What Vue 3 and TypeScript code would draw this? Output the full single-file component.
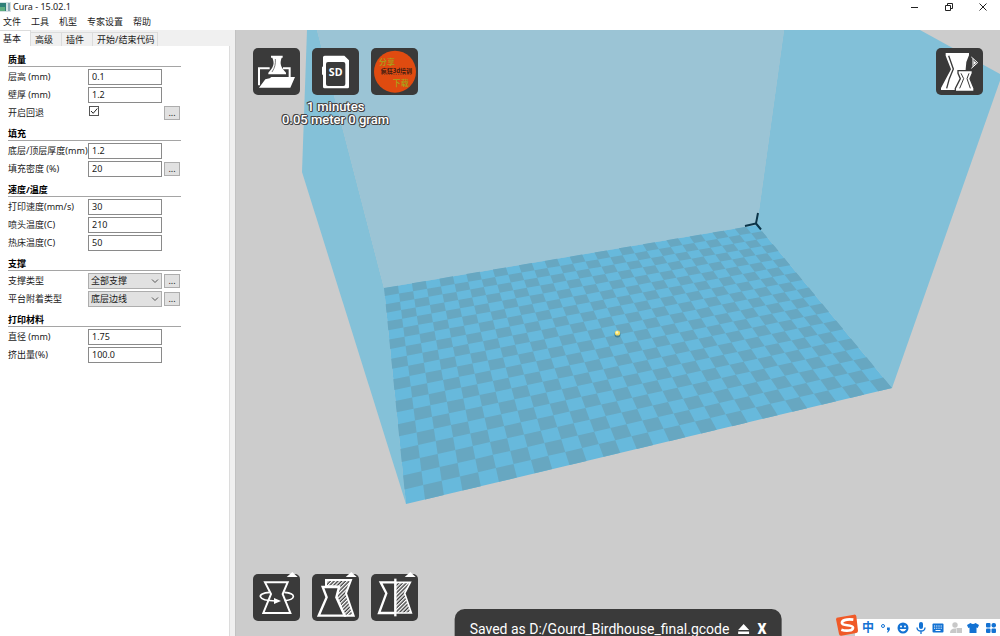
<script setup lang="ts">
import { ref } from 'vue'

type Point = [number, number]
interface Field {
  id: string
  label: string
  kind: 'text' | 'check' | 'select'
  value: string
  more?: boolean
}
interface Section {
  title: string
  fields: Field[]
}

const menus = ['文件', '工具', '机型', '专家设置', '帮助']
const tabs = ['基本', '高级', '插件', '开始/结束代码']
const activeTab = ref(0)

const sections = ref<Section[]>([
  {
    title: '质量',
    fields: [
      { id: 'layer', label: '层高 (mm)', kind: 'text', value: '0.1' },
      { id: 'wall', label: '壁厚 (mm)', kind: 'text', value: '1.2' },
      { id: 'retract', label: '开启回退', kind: 'check', value: '', more: true },
    ],
  },
  {
    title: '填充',
    fields: [
      { id: 'bottom', label: '底层/顶层厚度(mm)', kind: 'text', value: '1.2' },
      { id: 'density', label: '填充密度 (%)', kind: 'text', value: '20', more: true },
    ],
  },
  {
    title: '速度/温度',
    fields: [
      { id: 'speed', label: '打印速度(mm/s)', kind: 'text', value: '30' },
      { id: 'nozzle', label: '喷头温度(C)', kind: 'text', value: '210' },
      { id: 'bed', label: '热床温度(C)', kind: 'text', value: '50' },
    ],
  },
  {
    title: '支撑',
    fields: [
      { id: 'support', label: '支撑类型', kind: 'select', value: '全部支撑', more: true },
      { id: 'adhesion', label: '平台附着类型', kind: 'select', value: '底层边线', more: true },
    ],
  },
  {
    title: '打印材料',
    fields: [
      { id: 'diameter', label: '直径 (mm)', kind: 'text', value: '1.75' },
      { id: 'flow', label: '挤出量(%)', kind: 'text', value: '100.0' },
    ],
  },
])

// Perspective projection of the unit square onto the build plate.
const plate: Point[] = [[384, 288], [757, 225], [892, 388], [406, 504]]
const columns = 30
const rows = 20

function projector(q: Point[]) {
  const [[x0, y0], [x1, y1], [x2, y2], [x3, y3]] = q
  const dx1 = x1 - x2, dx2 = x3 - x2, sx = x0 - x1 + x2 - x3
  const dy1 = y1 - y2, dy2 = y3 - y2, sy = y0 - y1 + y2 - y3
  const det = dx1 * dy2 - dx2 * dy1
  const g = (sx * dy2 - dx2 * sy) / det
  const h = (dx1 * sy - sx * dy1) / det
  return (u: number, v: number): string => {
    const w = g * u + h * v + 1
    const x = ((x1 - x0 + g * x1) * u + (x3 - x0 + h * x3) * v + x0) / w
    const y = ((y1 - y0 + g * y1) * u + (y3 - y0 + h * y3) * v + y0) / w
    return `${x.toFixed(2)} ${y.toFixed(2)}`
  }
}

const at = projector(plate)
let darkCells = ''
for (let r = 0; r < rows; r++) {
  for (let c = r % 2; c < columns; c += 2) {
    const l = c / columns, rt = (c + 1) / columns, t = r / rows, b = (r + 1) / rows
    darkCells += `M${at(l, t)}L${at(rt, t)}L${at(rt, b)}L${at(l, b)}Z`
  }
}
</script>

<template>
  <div class="window">
    <header class="titlebar">
      <svg class="app-icon" viewBox="0 0 11 10" aria-hidden="true">
        <rect width="11" height="10" fill="#d5e2e4" />
        <rect y="1" width="6" height="8" fill="#2f7f78" />
        <rect y="5" width="5" height="4" fill="#5fae80" />
        <rect x="8" y="1" width="2" height="8" fill="#8aa9b8" />
      </svg>
      <span class="title">Cura - 15.02.1</span>
      <div class="window-buttons">
        <button aria-label="Minimize"><svg viewBox="0 0 10 10"><path d="M1 5.5H8" /></svg></button>
        <button aria-label="Restore"><svg viewBox="0 0 10 10"><path d="M1.5 3.5H6.500V8.500H1.500ZM3.500 3V1.500H8.500V6.500H7" /></svg></button>
        <button aria-label="Close"><svg viewBox="0 0 10 10"><path d="M1.500 1.500L8.500 8.500M8.500 1.500L1.500 8.500" /></svg></button>
      </div>
    </header>

    <nav class="menubar">
      <button v-for="m in menus" :key="m">{{ m }}</button>
    </nav>

    <main class="body">
      <aside class="sidebar">
        <div class="tabs" role="tablist">
          <button
            v-for="(t, i) in tabs"
            :key="t"
            role="tab"
            :aria-selected="i === activeTab"
            :class="{ active: i === activeTab }"
            @click="activeTab = i"
          >{{ t }}</button>
        </div>
        <form class="panel" @submit.prevent>
          <section v-for="s in sections" :key="s.title">
            <h2>{{ s.title }}</h2>
            <div v-for="f in s.fields" :key="f.id" class="row">
              <label :for="f.id">{{ f.label }}</label>
              <input v-if="f.kind === 'text'" :id="f.id" v-model="f.value" type="text" />
              <span v-else-if="f.kind === 'check'" class="check">
                <input :id="f.id" type="checkbox" checked />
                <svg viewBox="0 0 10 10" aria-hidden="true"><path d="M2 5L4.200 7.300L8.300 2.500" /></svg>
              </span>
              <span v-else class="choice">
                <select :id="f.id" v-model="f.value"><option>{{ f.value }}</option></select>
                <svg viewBox="0 0 8 6" aria-hidden="true"><path d="M1 1.500L4 4.500L7 1.500" /></svg>
              </span>
              <button v-if="f.more" class="more" type="button" :aria-label="f.label + ' …'">...</button>
            </div>
          </section>
        </form>
      </aside>

      <section class="viewport">
        <svg class="scene" viewBox="236 30 764 606" preserveAspectRatio="xMidYMid slice" aria-hidden="true">
          <path d="M317 30H784L757 225L384 288Z" fill="#9bc4d5" />
          <path d="M307 30H317L384 288L406 504L302 172Z" fill="#84c1d8" />
          <path d="M784 30H920L1002 75L892 388L757 225Z" fill="#82c0d8" />
          <path d="M384 288L757 225L892 388L406 504Z" fill="#67b9dc" />
          <path :d="darkCells" fill="#67a7c1" />
          <path d="M758 213L756 223.500L745 226M756 223.500L761 229.500" fill="none" stroke="#0b3448" stroke-width="2" />
          <circle cx="617.500" cy="334.500" r="3" fill="#3f7f98" />
          <circle cx="617.500" cy="333" r="2.600" fill="#f2dc62" />
          <circle cx="617" cy="332.500" r="1.200" fill="#fff7c4" />
        </svg>

        <div class="top">
          <div class="job">
            <div class="tools">
              <button class="tool" aria-label="Load">
                <svg viewBox="0 0 141 141">
                  <path d="M18 112V61H50M90 61H110V90" fill="none" stroke="#fff" stroke-width="6" />
                  <path d="M54 23H89V29H86C79 47 84 58 99 74V79H46V74C61 58 66 47 58 29H54Z" fill="#fff" />
                  <path d="M67 33C68 48 66 58 57 72" fill="none" stroke="#3a3a3a" stroke-width="2" />
                  <path d="M37 94L50 91L55 87H126L112 119H18Z" fill="#fff" />
                </svg>
              </button>
              <button class="tool" aria-label="Save to SD card">
                <svg viewBox="0 0 141 141">
                  <path d="M38 23H97L111 37V117Q111 121 107 121H38Q33 121 33 116V82L30 79V58L33 55V28Q33 23 38 23Z" fill="#fff" />
                  <rect x="42" y="42" width="58" height="72" rx="6" fill="#3a3a3a" />
                  <text x="71" y="84" class="sd">SD</text>
                </svg>
              </button>
              <button class="tool" aria-label="Share">
                <svg viewBox="0 0 141 141">
                  <circle cx="72" cy="71" r="63" fill="#e04b10" />
                  <text x="48" y="52" class="badge-green">分享</text>
                  <text x="76" y="75" class="badge-dark">疯狂3d培训</text>
                  <path d="M32 79H120" stroke="#8c3a1c" stroke-width="3" stroke-dasharray="4 3" />
                  <text x="89" y="113" class="badge-green">下载</text>
                </svg>
              </button>
            </div>
            <p class="estimate">1 minutes<br />0.05 meter 0 gram</p>
          </div>
          <button class="tool" aria-label="View mode">
            <svg viewBox="0 0 141 141">
              <path d="M29 15H99V22L91 42L89 64V126H15V120L45 64L29 23Z" fill="#fff" />
              <path d="M38 23L52 63L40 92L32 121" fill="none" stroke="#3a3a3a" stroke-width="4" />
              <path d="M66 68H109V76L102 92L114 121V130H58V121L73 92L66 76Z" fill="#fff" stroke="#3a3a3a" stroke-width="4" />
              <path d="M75 76L83 92L71 121M99 76L93 92L103 121" fill="none" stroke="#3a3a3a" stroke-width="3" />
              <path d="M106 27L125 44L106 61M111 32V56" fill="none" stroke="#fff" stroke-width="3" />
              <path d="M113 38L121 44L113 51Z" fill="#fff" />
            </svg>
          </button>
        </div>

        <div class="tools bottom">
          <button class="tool" aria-label="Rotate">
            <svg viewBox="0 0 141 141">
              <path d="M101 9L118 -6L134 9Z" fill="#fff" />
              <path d="M36 25H104L89 60L112 117H31L54 60Z" fill="none" stroke="#fff" stroke-width="6" />
              <path d="M50 55C10 57 10 80 68 81M94 55C132 58 128 77 95 80" fill="none" stroke="#fff" stroke-width="5" />
              <path d="M63 72L84 81L63 90Z" fill="#fff" />
            </svg>
          </button>
          <button class="tool" aria-label="Scale">
            <svg viewBox="0 0 141 141">
              <defs>
                <pattern id="hatch" width="8" height="8" patternUnits="userSpaceOnUse" patternTransform="rotate(45)">
                  <rect width="4" height="8" fill="#fff" />
                </pattern>
              </defs>
              <path d="M101 9L118 -6L134 9Z" fill="#fff" />
              <path d="M42 36V18H117L102 58L125 125H98L73 69L81 38Z" fill="url(#hatch)" stroke="#fff" stroke-width="6" />
              <path d="M32 39H81L73 70L98 125H20L44 70Z" fill="#3a3a3a" stroke="#fff" stroke-width="7" />
            </svg>
          </button>
          <button class="tool" aria-label="Mirror">
            <svg viewBox="0 0 141 141">
              <path d="M101 9L118 -6L134 9Z" fill="#fff" />
              <path d="M73 25H118L101 58L121 117H73Z" fill="url(#hatch)" stroke="#fff" stroke-width="5" />
              <path d="M73 25H29L46 58L24 117H73" fill="none" stroke="#fff" stroke-width="7" />
              <path d="M73 14V127" stroke="#fff" stroke-width="7" />
            </svg>
          </button>
        </div>

        <div class="toast" role="status">
          <span>Saved as D:/Gourd_Birdhouse_final.gcode</span>
          <button aria-label="Eject"><svg viewBox="0 0 12 12"><path d="M6 1L11.500 7H0.500ZM0.500 8.500H11.500V11H0.500Z" /></svg></button>
          <button class="dismiss">X</button>
        </div>

        <div class="ime">
          <svg class="ime-logo" viewBox="0 0 66 66" aria-hidden="true">
            <path d="M2 11L54 2Q60 1 61 7L66 50Q66 56 61 57L16 65Q10 66 9 60L0 16Z" fill="#f05a28" />
            <path d="M52 17C30 14 16 20 18 28C20 37 50 30 51 41C51 51 30 52 16 47" fill="none" stroke="#fff" stroke-width="8" />
          </svg>
          <div class="ime-bar">
            <span class="zh">中</span>
            <svg viewBox="0 0 12 12"><circle cx="3" cy="4" r="1.500" fill="none" stroke="#1372d3" /><path d="M7 5.500H9.800V8L8 10.500H7L8 8H7Z" /></svg>
            <svg viewBox="0 0 12 12"><circle cx="6" cy="6" r="5.500" /><circle cx="4" cy="4.500" r="1" fill="#fff" /><circle cx="8" cy="4.500" r="1" fill="#fff" /><path d="M2.500 7H9.500Q6 12 2.500 7Z" fill="#fff" /></svg>
            <svg viewBox="0 0 12 12"><rect x="4" y="0" width="4" height="7" rx="2" /><path d="M2 5.500Q2 9 6 9Q10 9 10 5.500M6 9V12" fill="none" stroke="#1372d3" stroke-width="1.300" /></svg>
            <svg viewBox="0 0 12 12"><rect x="0.500" y="1.500" width="11" height="9" rx="1" /><path d="M2 4H10M2 6.200H10" stroke="#fff" stroke-dasharray="1.200 1" /><path d="M3.500 8.500H8.500" stroke="#fff" /></svg>
            <svg viewBox="0 0 12 12" class="muted"><circle cx="5" cy="3" r="2.700" /><path d="M0 11Q0 6.500 5 6.500H6V11Z" /><rect x="6.500" y="6" width="5.500" height="5" /></svg>
            <svg viewBox="0 0 12 12"><path d="M3.500 1Q6 3 8.500 1L12 3L10.700 6L9.500 5.500V11H2.500V5.500L1.300 6L0 3Z" /></svg>
            <svg viewBox="0 0 12 12"><rect x="1" y="1" width="4.500" height="4.500" rx="1" /><rect x="6.500" y="1" width="4.500" height="4.500" rx="2" /><rect x="1" y="6.500" width="4.500" height="4.500" rx="1" /><rect x="6.500" y="6.500" width="4.500" height="4.500" rx="1" /></svg>
          </div>
        </div>
      </section>
    </main>
  </div>
</template>

<style>
body {
  margin: 0;
}
</style>

<style scoped>
.window {
  display: flex;
  flex-direction: column;
  height: 100vh;
  overflow: hidden;
  background: #fff;
  color: #1a1a1a;
  font: 9px/12px "Noto Sans", "Noto Sans CJK SC", sans-serif;
}
.window * {
  box-sizing: border-box;
}
button,
input,
select {
  margin: 0;
  padding: 0;
  border: 0;
  border-radius: 0;
  background: none;
  color: inherit;
  font: inherit;
}
svg {
  display: block;
}
.titlebar {
  display: flex;
  align-items: center;
  flex: none;
  height: 14px;
}
.app-icon {
  width: 11px;
  height: 10px;
}
.title {
  margin-left: 2px;
}
.window-buttons {
  display: flex;
  gap: 24px;
  margin-left: auto;
  padding-right: 12px;
}
.window-buttons svg {
  width: 10px;
  height: 10px;
  fill: none;
  stroke: #222;
}
.menubar {
  display: flex;
  align-items: center;
  flex: none;
  gap: 10px;
  height: 16px;
  padding-left: 3px;
}
.body {
  display: flex;
  flex: 1;
  min-height: 0;
}
.sidebar {
  display: flex;
  flex-direction: column;
  flex: none;
  width: 236px;
  padding-right: 5px;
  background: #f0f0f0;
  border-right: 1px solid #c2c2c2;
}
.tabs {
  display: flex;
  align-items: flex-end;
  height: 16px;
}
.tabs button {
  height: 14px;
  padding: 1px 8px 0 4px;
  border: 1px solid #dcdcdc;
  border-left: 0;
  border-bottom: 0;
}
.tabs button:last-child {
  padding-right: 3px;
}
.tabs button.active {
  height: 16px;
  padding: 0 9px 0 3px;
  background: #fff;
}
.panel {
  flex: 1;
  padding: 7px 0 0 8px;
  background: #fff;
  border-right: 1px solid #dcdcdc;
}
.panel section {
  width: 173px;
  margin-bottom: 6px;
}
h2 {
  height: 14px;
  margin: 0 0 2px;
  border-bottom: 1px solid #a5a5a5;
  color: #000;
  font-size: 9px;
  line-height: 14px;
  font-weight: 700;
}
.row {
  display: grid;
  grid-template-columns: 80px 74px 16px;
  align-items: center;
  height: 16px;
  margin-bottom: 2px;
}
.row:last-child {
  margin-bottom: 0;
}
.row label {
  white-space: nowrap;
}
.row input[type="text"] {
  width: 74px;
  height: 16px;
  padding: 0 3px 2px;
  border: 1px solid #8a8a8a;
  background: #fff;
}
.check,
.choice {
  position: relative;
}
.check {
  align-self: start;
}
.check input {
  display: block;
  appearance: none;
  width: 10px;
  height: 10px;
  margin: 1px 0 0 1px;
  border: 1px solid #555;
  background: #fff;
}
.check svg {
  position: absolute;
  left: 1px;
  top: 1px;
  width: 10px;
  height: 10px;
  fill: none;
  stroke: #222;
  pointer-events: none;
}
.choice select {
  display: block;
  appearance: none;
  width: 74px;
  height: 16px;
  padding-left: 2px;
  border: 1px solid #adadad;
  background: #e1e1e1;
}
.choice svg {
  position: absolute;
  right: 3px;
  top: 5px;
  width: 8px;
  height: 6px;
  fill: none;
  stroke: #555;
  pointer-events: none;
}
.more {
  width: 16px;
  height: 14px;
  margin-left: 2px;
  border: 1px solid #adadad;
  background: #e1e1e1;
  line-height: 10px;
}
.viewport {
  position: relative;
  display: flex;
  flex: 1;
  flex-direction: column;
  justify-content: space-between;
  min-width: 0;
  padding: 18px 17px 15px;
  background: #ccc;
}
.scene {
  position: absolute;
  inset: 0;
  width: 100%;
  height: 100%;
}
.top {
  position: relative;
  display: flex;
  justify-content: space-between;
  align-items: flex-start;
}
.tools {
  position: relative;
  display: flex;
  gap: 12px;
}
.tool {
  width: 47px;
  height: 47px;
  border-radius: 5px;
  background: #3a3a3a;
}
.tool svg {
  width: 47px;
  height: 47px;
  overflow: visible;
}
.sd {
  fill: #fff;
  font: 700 32px "Noto Sans", sans-serif;
  text-anchor: middle;
}
.badge-green {
  fill: #a5a51c;
  font: 500 24px "Noto Sans CJK SC", sans-serif;
  text-anchor: middle;
}
.badge-dark {
  fill: #3a1a10;
  font: 700 18px "Noto Sans CJK SC", sans-serif;
  text-anchor: middle;
}
.estimate {
  margin: 5px 0 0;
  color: #fff;
  font: 500 13px/13px Roboto, Arial, sans-serif;
  text-align: center;
  text-shadow: 1px 0 #444, -1px 0 #444, 0 1px #444, 0 -1px #444, 1px 1px #444, -1px -1px #444;
}
.toast {
  position: absolute;
  left: 50%;
  bottom: -13px;
  display: flex;
  align-items: center;
  gap: 8px;
  height: 40px;
  padding: 0 15px;
  border-radius: 10px;
  background: #3a3a3a;
  color: #fff;
  font: 14px/15px Roboto, Arial, sans-serif;
  white-space: nowrap;
  transform: translateX(-50%);
}
.toast svg {
  width: 12px;
  height: 12px;
  fill: #fff;
}
.toast .dismiss {
  font-weight: 900;
}
.ime {
  position: absolute;
  right: 0;
  bottom: 0;
  display: flex;
  align-items: flex-end;
}
.ime-logo {
  position: relative;
  width: 22px;
  height: 22px;
  margin-right: -3px;
}
.ime-bar {
  display: flex;
  align-items: center;
  justify-content: space-between;
  width: 145px;
  height: 17px;
  padding: 0 3px 0 7px;
  background: #fff;
}
.ime-bar svg {
  width: 12px;
  height: 12px;
  fill: #1372d3;
}
.ime-bar svg.muted {
  fill: #c8c8c8;
}
.zh {
  color: #1372d3;
  font-size: 12px;
  font-weight: 700;
}
</style>
